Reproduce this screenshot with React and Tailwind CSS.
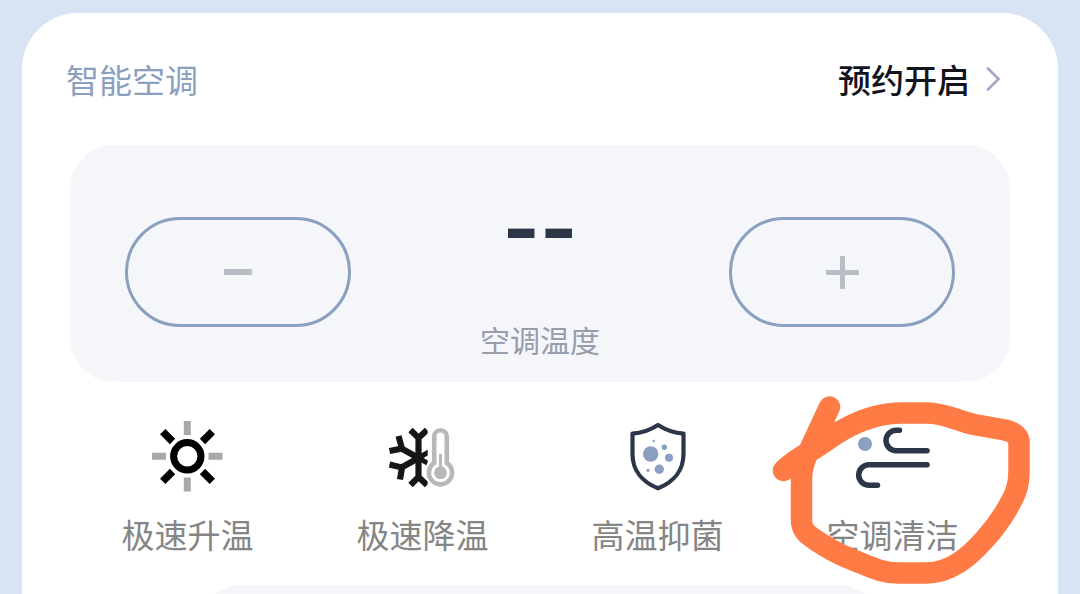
import { useState } from "react";

const HeatIcon = () => (
  <svg className="h-20 w-[81px]" viewBox="0 0 81 80" fill="none" aria-hidden="true">
    <circle cx="40.300" cy="40.300" r="13.700" stroke="#000" strokeWidth="7" />
    <path d="M40.300 5v14M40.300 61.500v14M5 40.300h14M61.500 40.300h14" stroke="#a8a8a8" strokeWidth="7" />
    <path d="M25.500 25.500L15.700 15.700M55.500 25.500l9.800-9.800M25.500 55.500l-9.800 9.800M55.500 55.500l9.800 9.800" stroke="#000" strokeWidth="7.500" />
  </svg>
);

const CoolIcon = () => (
  <svg className="h-20 w-[81px]" viewBox="0 0 81 80" fill="none" aria-hidden="true">
    <clipPath id="flake">
      <rect x="0" y="0" width="45.7" height="80" />
    </clipPath>
    <g clipPath="url(#flake)" stroke="#161616" strokeWidth="6.200">
      <path d="M36.500 20v44M28.500 14l8 8 8.500-8M28.500 69l8-8 8.500 8" />
      <path d="M36.500 42L19.500 32.500M16.500 20l3.500 12.500-12.500 2.500" />
      <path d="M36.500 42L19.500 51.500M18 63.500l2-12-12.500-3" />
      <path d="M36.500 42l12-7M36.500 42l9 5" strokeWidth="5" />
    </g>
    <g stroke="#b8b8b8" strokeWidth="4.600">
      <path d="M52.200 47V20.600a6.300 6.300 0 0 1 12.600 0V47a11.600 11.600 0 1 1-12.600 0z" />
      <path d="M58.500 39v16" strokeWidth="3" strokeLinecap="round" />
    </g>
    <circle cx="58.500" cy="56.700" r="6.400" fill="#b8b8b8" />
  </svg>
);

const ShieldIcon = () => (
  <svg className="h-20 w-[81px]" viewBox="0 0 81 80" fill="none" aria-hidden="true">
    <path
      d="M41 9C48 13.500 57 17 66.500 17.700V38C66.500 54 57 66 41 72.300C25 66 15.500 54 15.500 38V17.700C25 17 34 13.500 41 9z"
      stroke="#2d3648"
      strokeWidth="4.200"
      strokeLinejoin="round"
    />
    <g fill="#8b9fc2">
      <circle cx="33.700" cy="38" r="7.700" />
      <circle cx="47.300" cy="31.300" r="2.700" />
      <circle cx="52" cy="41.700" r="4" />
      <circle cx="42.300" cy="53.300" r="4.700" />
      <circle cx="36.700" cy="25" r="1.200" />
      <circle cx="31" cy="54.300" r="1.600" />
    </g>
  </svg>
);

const WindIcon = () => (
  <svg className="h-20 w-[81px]" viewBox="0 0 81 80" fill="none" aria-hidden="true">
    <g stroke="#2d3648" strokeWidth="5.500" strokeLinecap="round">
      <path d="M47.500 14.200H44.300a10.300 10.300 0 0 0 0 20.600H75" />
      <path d="M75 48.700H17a10.300 10.300 0 0 0 0 20.600H25.500" />
    </g>
    <g fill="#8b9fc2">
      <circle cx="13" cy="28" r="7" />
      <circle cx="17" cy="10.500" r="3" />
    </g>
  </svg>
);

// Hand drawn marker around the highlighted mode
const MarkerCircle = () => (
  <svg
    className="pointer-events-none absolute left-1/2 -top-7 h-[200px] w-[280px] -translate-x-1/2"
    viewBox="753 388 280 200"
    fill="none"
    aria-hidden="true"
  >
    <path
      d="M829.500 407L809 451Q801.500 465 801.500 480V520C801.500 531 808 535 817 541C829 549 840 555 853 560C869 566 880 573 899 573H926C951 573 970 556 985 539C994 529 1000 521 1007 509C1014 497 1019 488 1019 472V443C1019 435 1013 432 1005 430L974 424.500C955 420 944 413 927 413H902C877 413 858 421 841 431C832 436 822 444 812 450C803 456 793 461 783.500 470.500"
      stroke="#ff7b45"
      strokeWidth="21.500"
      strokeLinecap="round"
      strokeLinejoin="round"
    />
  </svg>
);

const modes = [
  { name: "极速升温", Icon: HeatIcon },
  { name: "极速降温", Icon: CoolIcon },
  { name: "高温抑菌", Icon: ShieldIcon },
  { name: "空调清洁", Icon: WindIcon, marked: true },
];

const stepButton =
  "flex h-[110px] w-[226px] items-center justify-center rounded-full border-3 border-[#8b9fbf] text-[#b9bdc6]";

const App = () => {
  const [temperature, setTemperature] = useState(null);

  const changeTemperature = (step) => {
    setTemperature((prev) => (prev === null ? 24 : prev + step));
  };

  return (
    <div className="h-screen overflow-hidden bg-[#d8e4f3] px-[22px] pt-[13px] font-['Noto_Sans_CJK_SC',sans-serif]">
      <main className="min-h-full rounded-t-[56px] bg-white pt-[46px]">
        <header className="flex items-center justify-between pr-14 pl-11 text-[33px] leading-10">
          <h1 className="text-[#8b9fbf]">智能空调</h1>
          <a href="#schedule" className="flex items-center gap-4 font-medium text-[#11141d]">
            预约开启
            <svg className="h-6 w-4" viewBox="0 0 16 24" fill="none" aria-hidden="true">
              <path d="M2 1.500L12.500 12L2 22.500" stroke="#a3a6c6" strokeWidth="2.600" strokeLinecap="round" />
            </svg>
          </a>
        </header>

        {/* Temperature */}
        <section className="mx-12 mt-[46px] flex h-[237px] items-start justify-between rounded-[44px] bg-[#f4f6fa] px-[55px] pt-[72px]">
          <button aria-label="降低温度" onClick={() => changeTemperature(-1)} className={stepButton}>
            <svg className="size-9" viewBox="0 0 36 36" aria-hidden="true">
              <rect x="4" y="15" width="28" height="6" rx="1" fill="currentColor" />
            </svg>
          </button>
          <div className="flex flex-col items-center">
            <output className="font-['Inter',sans-serif] text-[80px] leading-[22px] font-bold text-[#2d3648]">
              {temperature === null ? "--" : temperature}
            </output>
            <span className="mt-20 text-[30px] leading-10 text-[#979dab]">空调温度</span>
          </div>
          <button aria-label="升高温度" onClick={() => changeTemperature(1)} className={stepButton}>
            <svg className="size-9" viewBox="0 0 36 36" aria-hidden="true">
              <rect x="2" y="16" width="33" height="5" rx="1" fill="currentColor" />
              <rect x="16" y="2" width="5" height="33" rx="1" fill="currentColor" />
            </svg>
          </button>
        </section>

        {/* Modes */}
        <section className="mx-12 mt-[34px] grid grid-cols-4">
          {modes.map(({ name, Icon, marked }) => (
            <button key={name} className="relative flex flex-col items-center">
              <Icon />
              <span className="mt-[18px] text-[33px] leading-10 text-[#858585]">{name}</span>
              {marked && <MarkerCircle />}
            </button>
          ))}
        </section>

        <section className="mx-auto mt-[31px] h-24 w-2/3 rounded-full bg-[#f4f6fa]" />
      </main>
    </div>
  );
};

export default App;
